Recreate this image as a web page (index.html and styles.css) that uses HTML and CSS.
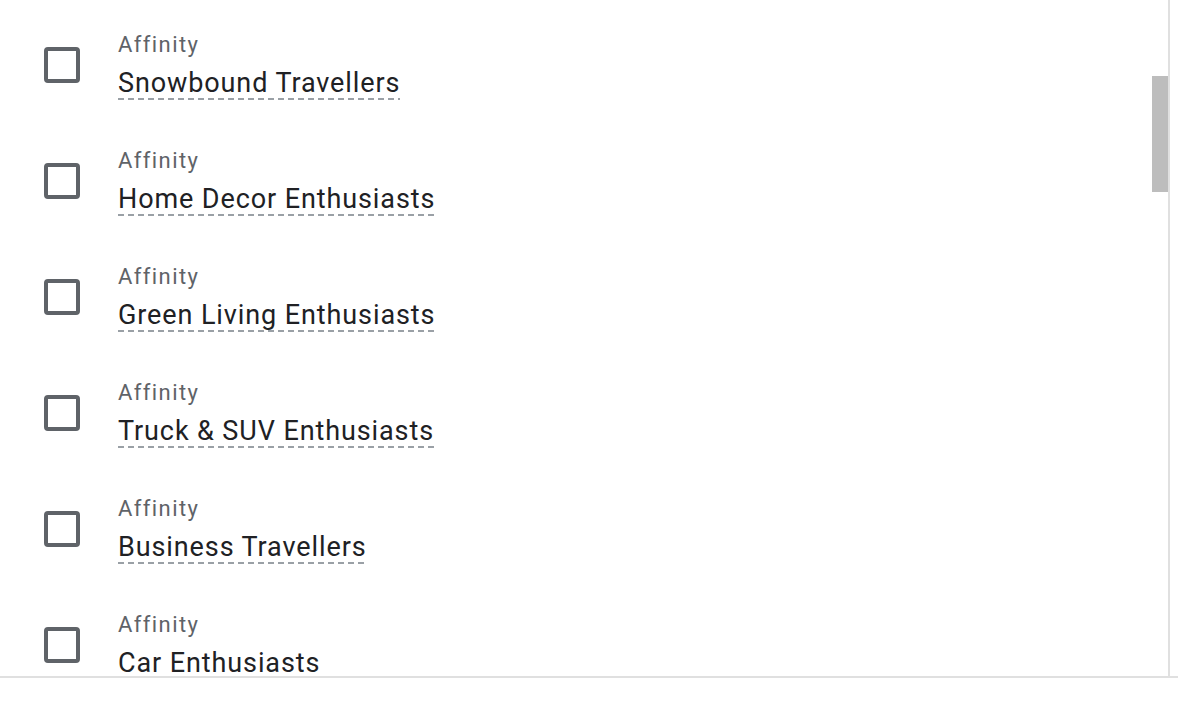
FILE: index.html
```html
<!DOCTYPE html>
<html>
<head>
<meta charset="utf-8">
<link rel="stylesheet" href="styles.css">
</head>
<body>
<div class="panel">
  <div class="list">
    <div class="row">
      <span class="checkbox"></span>
      <div class="text">
        <div class="label">Affinity</div>
        <div class="title"><span class="name">Snowbound Travellers</span></div>
      </div>
    </div>
    <div class="row">
      <span class="checkbox"></span>
      <div class="text">
        <div class="label">Affinity</div>
        <div class="title"><span class="name">Home Decor Enthusiasts</span></div>
      </div>
    </div>
    <div class="row">
      <span class="checkbox"></span>
      <div class="text">
        <div class="label">Affinity</div>
        <div class="title"><span class="name">Green Living Enthusiasts</span></div>
      </div>
    </div>
    <div class="row">
      <span class="checkbox"></span>
      <div class="text">
        <div class="label">Affinity</div>
        <div class="title"><span class="name">Truck &amp; SUV Enthusiasts</span></div>
      </div>
    </div>
    <div class="row">
      <span class="checkbox"></span>
      <div class="text">
        <div class="label">Affinity</div>
        <div class="title"><span class="name">Business Travellers</span></div>
      </div>
    </div>
    <div class="row">
      <span class="checkbox"></span>
      <div class="text">
        <div class="label">Affinity</div>
        <div class="title"><span class="name">Car Enthusiasts</span></div>
      </div>
    </div>
    <div class="thumb"></div>
  </div>
</div>
</body>
</html>
```
FILE: styles.css
```css
html, body {
  margin: 0;
  padding: 0;
  background: #ffffff;
}

body {
  font-family: Roboto, "Liberation Sans", sans-serif;
}

.panel {
  display: flex;
  height: 676px;
  border-bottom: 2px solid #e0e0e0;
}

.list {
  position: relative;
  width: 1168px;
  border-right: 2px solid #e0e0e0;
  overflow: hidden;
}

.row {
  display: flex;
  align-items: flex-start;
  height: 116px;
  padding: 29px 0 0 44px;
  box-sizing: border-box;
  gap: 38px;
}

.checkbox {
  flex: none;
  width: 36px;
  height: 36px;
  margin-top: 18px;
  box-sizing: border-box;
  border: 4px solid #5f6368;
  border-radius: 4px;
}

.text {
  display: flex;
  flex-direction: column;
  gap: 6px;
}

.label {
  font-size: 22px;
  line-height: 32px;
  color: #5f6368;
  letter-spacing: 1.4px;
}

.title {
  font-size: 27px;
  line-height: 32px;
  color: #202124;
  letter-spacing: 0.9px;
}

.name {
  display: inline-block;
  background-image: repeating-linear-gradient(to right, #9aa0a6 0 6px, transparent 6px 10px);
  background-size: 100% 2px;
  background-position: left bottom;
  background-repeat: no-repeat;
  padding-bottom: 1px;
}

.thumb {
  position: absolute;
  top: 76px;
  right: 0;
  width: 16px;
  height: 116px;
  background: #bdbdbd;
}
```
